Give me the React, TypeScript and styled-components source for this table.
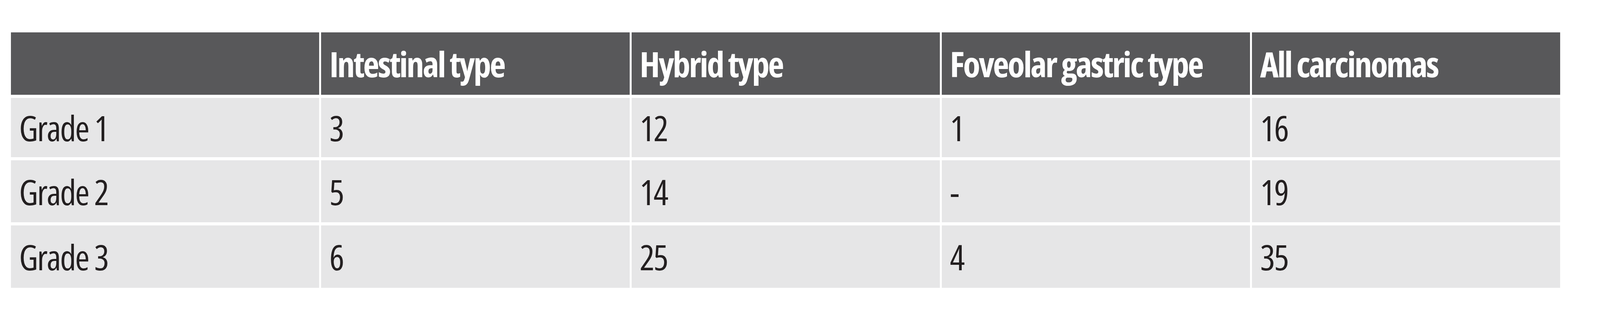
import styled, { createGlobalStyle } from 'styled-components';

const Global = createGlobalStyle`
  body {
    margin: 0;
    background: #fff;
  }
`;

const Page = styled.div`
  padding: 83px 2.48vw 0 0.687vw;
`;

const Table = styled.div`
  display: grid;
  grid-template-columns: repeat(5, minmax(0, 1fr));
  grid-template-rows: 160px 152px 159px 160px;
  column-gap: 0.127vw;
  row-gap: 8px;
  font-family: "Open Sans", "Noto Sans", sans-serif;
  font-stretch: 75%;
  font-size: 90px;
`;

const Cell = styled.div<{ $head?: boolean }>`
  display: flex;
  align-items: center;
  padding-left: 0.506vw;
  white-space: nowrap;
  overflow: hidden;
  background: ${(p) => (p.$head ? '#58585a' : '#e6e6e7')};
  color: ${(p) => (p.$head ? '#ffffff' : '#231f20')};
  font-weight: ${(p) => (p.$head ? 700 : 400)};
  letter-spacing: ${(p) => (p.$head ? '-3.6px' : '-2.6px')};
`;

const columns = ['', 'Intestinal type', 'Hybrid type', 'Foveolar gastric type', 'All carcinomas'];

const rows = [
  ['Grade 1', '3', '12', '1', '16'],
  ['Grade 2', '5', '14', '-', '19'],
  ['Grade 3', '6', '25', '4', '35'],
];

export default function App() {
  return (
    <>
      <Global />
      <Page>
        <Table>
          {columns.map((c, i) => (
            <Cell key={`h${i}`} $head>
              {c}
            </Cell>
          ))}
          {rows.map((r) =>
            r.map((v, i) => <Cell key={`${r[0]}-${i}`}>{v}</Cell>)
          )}
        </Table>
      </Page>
    </>
  );
}
